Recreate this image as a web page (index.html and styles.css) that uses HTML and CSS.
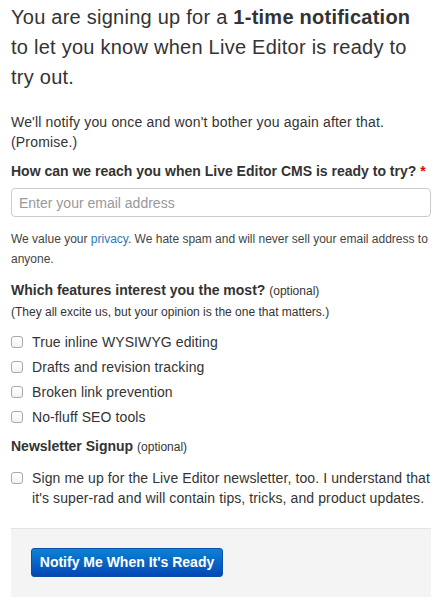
FILE: index.html
```html
<!DOCTYPE html>
<html>
<head>
<meta charset="utf-8">
<link rel="stylesheet" href="styles.css">
</head>
<body>
<form class="signup">
  <h1 class="intro">You are signing up for a <strong>1-time notification</strong> to let you know when Live Editor is ready to try out.</h1>
  <p class="lead">We'll notify you once and won't bother you again after that. (Promise.)</p>

  <label class="field-label" for="email">How can we reach you when Live Editor CMS is ready to try? <span class="req">*</span></label>
  <input class="text-input" id="email" type="email" placeholder="Enter your email address">
  <p class="help">We value your <a href="#" class="link">privacy</a>. We hate spam and will never sell your email address to anyone.</p>

  <div class="group">
    <div class="group-title">Which features interest you the most? <span class="opt">(optional)</span></div>
    <div class="group-sub">(They all excite us, but your opinion is the one that matters.)</div>
    <ul class="checks">
      <li class="check"><span class="box"></span><span>True inline WYSIWYG editing</span></li>
      <li class="check"><span class="box"></span><span>Drafts and revision tracking</span></li>
      <li class="check"><span class="box"></span><span>Broken link prevention</span></li>
      <li class="check"><span class="box"></span><span>No-fluff SEO tools</span></li>
    </ul>
  </div>

  <div class="group news">
    <div class="group-title">Newsletter Signup <span class="opt">(optional)</span></div>
    <div class="check multi"><span class="box"></span><span>Sign me up for the Live Editor newsletter, too. I understand that it's super-rad and will contain tips, tricks, and product updates.</span></div>
  </div>

  <div class="actions">
    <button type="button" class="btn">Notify Me When It's Ready</button>
  </div>
</form>
</body>
</html>
```

FILE: styles.css
```css
* { box-sizing: border-box; }
html, body { margin: 0; padding: 0; background: #fff; }
body {
  font-family: "Liberation Sans", Arial, sans-serif;
  color: #333;
  font-size: 14px;
  line-height: 20px;
}
.signup {
  width: 420px;
  margin: 0 0 0 11px;
  padding-top: 2px;
}
.intro {
  margin: 0;
  font-size: 20px;
  line-height: 30px;
  font-weight: normal;
  letter-spacing: 0.25px;
  color: #333;
}
.intro strong { font-weight: bold; }
.lead {
  margin: 19.5px 0 0;
  font-size: 14px;
  line-height: 20px;
  letter-spacing: 0.18px;
}
.field-label {
  display: block;
  margin-top: 9px;
  font-weight: bold;
  font-size: 14px;
  line-height: 20px;
}
.req { color: #e00; }
.text-input {
  display: block;
  width: 420px;
  height: 29px;
  margin-top: 7.5px;
  padding: 0 7px;
  border: 1px solid #ccc;
  border-radius: 4px;
  font-family: inherit;
  font-size: 14px;
  color: #333;
  outline: none;
}
.text-input::placeholder { color: #999; }
.help {
  margin: 12px 0 0;
  font-size: 12px;
  line-height: 20px;
  color: #444;
}
.link { color: #2a7ab9; text-decoration: none; }
.group { margin-top: 10.5px; }
.group-title {
  font-weight: bold;
  font-size: 14px;
  line-height: 20px;
}
.opt { font-weight: normal; font-size: 12px; }
.group-sub {
  margin-top: 1px;
  font-size: 12px;
  line-height: 20px;
}
.checks {
  list-style: none;
  margin: 10.5px 0 0;
  padding: 0;
  display: flex;
  flex-direction: column;
  gap: 5px;
}
.check {
  display: flex;
  align-items: flex-start;
  gap: 9px;
  font-size: 14px;
  line-height: 20px;
  letter-spacing: 0.1px;
}
.box {
  flex: none;
  width: 12px;
  height: 12px;
  margin-top: 4px;
  border: 1px solid #a9a9a9;
  border-radius: 3px;
  background: linear-gradient(#fff, #f3f3f3);
}
.news { margin-top: 9px; }
.news .multi { margin-top: 10.5px; }
.actions {
  margin-top: 20px;
  background: #f4f4f4;
  border-top: 1px solid #e3e3e3;
  padding: 19px 20px 20px;
}
.btn {
  display: block;
  height: 29px;
  width: 192px;
  padding: 0;
  border: 1px solid #0a4fa9;
  border-radius: 3px;
  background: linear-gradient(#0b83d3, #0547b7);
  color: #fff;
  font-family: inherit;
  font-weight: bold;
  font-size: 14px;
  line-height: 27px;
  text-align: center;
}
```
